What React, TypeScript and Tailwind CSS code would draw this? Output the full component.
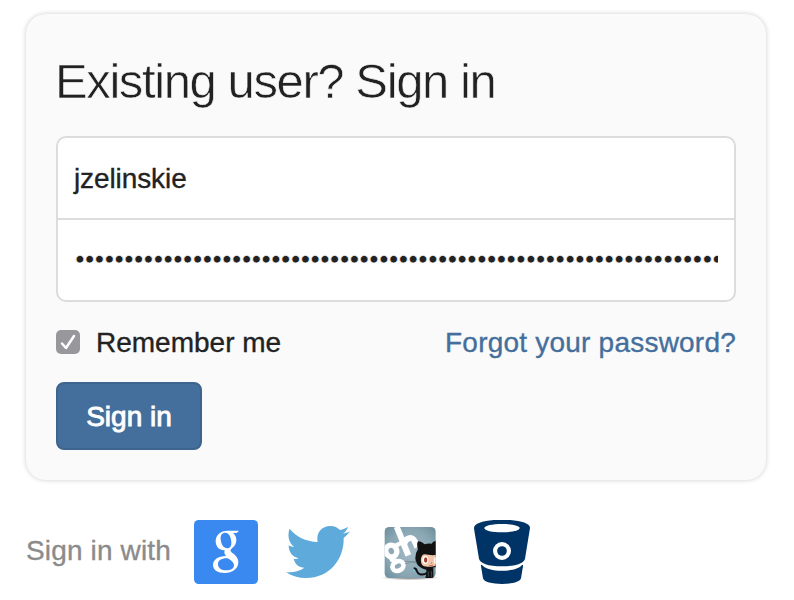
import React from "react";

function GoogleIcon() {
  return (
    <svg className="block h-16 w-16" viewBox="42 30 192 192" aria-label="Google">
      <rect x="42" y="30" width="192" height="192" rx="14" fill="#3a89f1" />
      <path
        fill="#fff"
        fillRule="evenodd"
        d="M177 62 L170 69 H159 C166 75 169 82 169 90 C169 102 163 109 156 115 C151 119 150 122 154 126 C162 133 175 140 175 157 C175 177 157 189 134 189 C113 189 99 180 99 165 C99 149 114 139 138 138 C133 133 132 127 134 121 C118 122 107 110 107 94 C107 75 122 62 142 62 Z M136 68 C126 68 121 76 122 88 C123 103 131 115 142 115 C151 115 155 107 154 96 C153 81 147 68 136 68 Z M143 145 C125 144 114 151 114 162 C114 174 124 181 139 181 C153 181 162 175 162 166 C162 157 153 151 143 145 Z"
      />
    </svg>
  );
}

function TwitterIcon() {
  return (
    <svg className="block h-16 w-16" viewBox="6 -6 192 192" aria-label="Twitter">
      <path
        fill="#5eaadb"
        d="M17 20 C35 44 65 58 101 60 C95 32 114 12 139 12 C152 12 161 17 168 24 C177 22 184 19 192 14 C189 24 183 31 177 35 C185 34 191 32 198 28 C192 37 186 42 179 48 C181 110 138 168 66 168 C44 168 23 162 6 150 C28 153 46 147 61 137 C44 136 33 127 29 110 C34 111 39 111 44 109 C26 105 14 91 14 70 C19 74 25 75 31 75 C15 64 9 40 17 20 Z"
      />
    </svg>
  );
}

function GithubIcon() {
  return (
    <svg className="block h-16 w-16" viewBox="27 30 192 192" aria-label="GitHub">
      <defs>
        <radialGradient id="tile" cx="0.5" cy="0.5" r="0.75">
          <stop offset="0" stopColor="#a3bbc5" />
          <stop offset="0.6" stopColor="#89a6b3" />
          <stop offset="1" stopColor="#668896" />
        </radialGradient>
        <radialGradient id="ground">
          <stop offset="0.3" stopColor="#000" stopOpacity="0.4" />
          <stop offset="1" stopColor="#000" stopOpacity="0" />
        </radialGradient>
        <clipPath id="tileClip">
          <rect x="47" y="51" width="153" height="153" rx="14" />
        </clipPath>
      </defs>
      <ellipse cx="123" cy="203" rx="88" ry="8" fill="url(#ground)" />
      <rect x="47" y="51" width="153" height="153" rx="14" fill="url(#tile)" />
      <g clipPath="url(#tileClip)">
        <g fill="none" stroke="#fff">
          <ellipse cx="67" cy="123" rx="16" ry="18" strokeWidth="16" transform="rotate(-25 67 123)" />
          <path d="M78 108 L99 98" strokeWidth="13" />
          <path d="M71 140 C64 148 68 155 84 151" strokeWidth="13" />
          <ellipse cx="87" cy="168" rx="17" ry="14" strokeWidth="14" transform="rotate(-25 87 168)" />
          <path d="M83 50 L118 136" strokeWidth="18" />
          <path d="M106 103 C107 84 130 77 137 94 L145 112" strokeWidth="18" />
        </g>
        <path
          d="M134 175 C148 175 139 189 153 193 C163 195 170 192 175 188"
          fill="none"
          stroke="#111"
          strokeWidth="6"
        />
        <path
          fill="#111"
          d="M147 118 C143 106 144 97 148 94 C156 94 162 99 167 103 Q177 99 188 101 C192 96 196 93 204 92 V172 H193 V204 H169 Q173 194 172 179 C150 175 139 160 139 143 Q139 129 147 118 Z"
        />
        <path
          fill="#f3c6aa"
          d="M165 133 C174 132 188 138 202 134 V166 C192 171 173 172 162 167 C153 161 153 137 165 133 Z"
        />
        <ellipse cx="169" cy="150" rx="9" ry="12" fill="#fff" />
        <ellipse cx="170" cy="150" rx="5" ry="8" fill="#a63a32" />
        <ellipse cx="200" cy="151" rx="5" ry="11" fill="#fff" />
        <path d="M181 166 L187 167 L192 165 M186 159 h3" fill="none" stroke="#9d3e35" strokeWidth="2" />
        <path d="M178 184 V200 M187 183 V201" stroke="#55656b" strokeWidth="2" />
        <path d="M107 154 L143 155 M107 161 L131 157 L143 158" fill="none" stroke="#66777d" strokeWidth="1.5" />
        <circle cx="135" cy="181" r="3" fill="#75c9ef" />
      </g>
    </svg>
  );
}

function BitbucketIcon() {
  return (
    <svg className="block h-16 w-16" viewBox="30 30 192 192" aria-label="Bitbucket">
      <path
        fill="#003366"
        fillRule="evenodd"
        d="M126 29 C82 29 42 38 42 54 C43 65 50 101 57 146 C59 159 85 169 126 169 C167 169 193 159 195 146 L210 54 C212 38 170 29 126 29 Z M126 42 C155 42 179 47 179 54 C179 62 155 67 126 67 C97 67 73 62 73 54 C73 47 97 42 126 42 Z M126 96 A27 27 0 1 1 126 150 A27 27 0 1 1 126 96 Z"
      />
      <circle cx="126" cy="123" r="14.5" fill="#003366" />
      <path
        fill="#003366"
        d="M66 165 C82 188 170 188 186 165 Q190 162 189 169 L183 205 C181 216 155 222 126 222 C97 222 71 216 69 205 L63 169 Q62 162 66 165 Z"
      />
    </svg>
  );
}

export default function App() {
  return (
    <div className="h-[600px] w-[794px] overflow-hidden bg-white pl-[26px] pt-[14px] font-['Liberation_Sans',Arial,sans-serif] text-[28px] leading-8 text-[#222] [-webkit-text-stroke:0.35px_currentColor]">
      <form className="h-[466px] w-[740px] rounded-[20px] bg-[#fafafa] px-[30px] pt-[38px] shadow-[0_0_5px_rgba(0,0,0,0.2)]">
        <h1 className="-ml-px h-[84px] whitespace-nowrap text-[49px] leading-[58px] tracking-[-1.4px] [-webkit-text-stroke:0.6px_#fafafa]">
          Existing user? Sign in
        </h1>
        <div className="h-[166px] rounded-[10px] border-2 border-[#dcdcdc] bg-white">
          <div className="flex h-[82px] items-center border-b-2 border-[#dcdcdc] px-4 pt-0.5">
            <span className="tracking-[-0.1px]">jzelinskie</span>
          </div>
          <div className="flex h-20 items-center px-4 pb-0.5">
            <span className="w-full overflow-hidden whitespace-nowrap pl-px [-webkit-text-stroke:0.6px_white]">
              {"•".repeat(66)}
            </span>
          </div>
        </div>
        <div className="mt-[25px] flex h-8 items-center justify-between">
          <label className="flex items-center gap-4">
            <span className="-mt-0.5 flex h-6 w-6 items-center justify-center rounded-[5px] bg-[#98979c]">
              <svg className="h-6 w-6" viewBox="0 0 24 24" fill="none" stroke="#fff" strokeWidth="2.5">
                <path d="M6 13.5 L10 18 L18 6" strokeLinecap="round" strokeLinejoin="round" />
              </svg>
            </span>
            <span>Remember me</span>
          </label>
          <a className="tracking-[0.22px] text-[#446f9c]">Forgot your password?</a>
        </div>
        <button
          type="button"
          className="mt-[23px] flex h-[68px] w-[146px] items-center justify-center rounded-lg border-2 border-[#3d648d] bg-[#446f9c] pt-0.5 text-white [-webkit-text-stroke:0.9px_white]"
        >
          Sign in
        </button>
      </form>
      <div className="mt-10 flex h-16 items-center text-[#8b8b8b]">
        <span className="-mt-0.5 w-[168px] whitespace-nowrap tracking-[0.15px]">Sign in with</span>
        <div className="flex gap-7">
          <GoogleIcon />
          <TwitterIcon />
          <GithubIcon />
          <BitbucketIcon />
        </div>
      </div>
    </div>
  );
}
